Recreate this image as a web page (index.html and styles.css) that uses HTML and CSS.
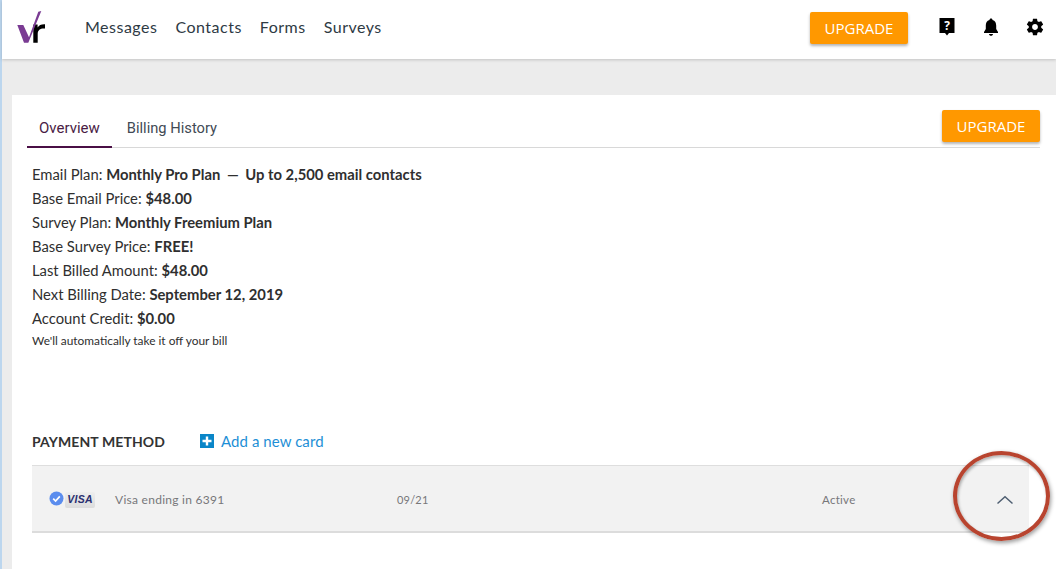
FILE: index.html
```html
<!DOCTYPE html>
<html lang="en">
<head>
<meta charset="utf-8">
<title>Billing</title>
<link rel="stylesheet" href="styles.css">
</head>
<body>
<div class="app">
  <header class="topbar">
    <svg class="logo" width="30" height="34" viewBox="0 -1 30 34">
      <path class="logo-r" d="M16.300 30.700V12.500H20.600V15.500C21.800 13.200 24.500 12 28 12.200V16.600C23.500 16.200 20.700 18 20.700 22V30.700Z"/>
      <path class="logo-v" d="M0.300 13H6.300L12 25.300L21.300 -0.300L24.300 -1L11.300 30.700H7Z"/>
    </svg>
    <nav class="mainnav">
      <a>Messages</a>
      <a>Contacts</a>
      <a>Forms</a>
      <a>Surveys</a>
    </nav>
    <button class="upgrade upgrade-top">UPGRADE</button>
    <div class="tools">
      <svg width="16" height="20" viewBox="0 0 16 20"><path d="M0.500 1H15.500V16H10L8 18.500L6 16H0.500Z"/><text x="8" y="13" class="qmark">?</text></svg>
      <svg width="16" height="18" viewBox="0 0 16 18"><path d="M8 0.500C9 0.500 9.500 1.200 9.500 2C12.200 2.800 13.200 5 13.200 7.500V11L15 14V15H1V14L2.800 11V7.500C2.800 5 3.800 2.800 6.500 2C6.500 1.200 7 0.500 8 0.500ZM6 16H10C10 17 9 17.800 8 17.800C7 17.800 6 17 6 16Z"/></svg>
      <svg class="gear" width="20" height="20" viewBox="0 0 24 24"><path d="M19.430 12.980c.04-.32.070-.64.070-.98s-.03-.66-.07-.98l2.110-1.650c.19-.15.240-.42.120-.64l-2-3.460c-.12-.22-.39-.3-.61-.22l-2.490 1c-.52-.4-1.080-.73-1.690-.98l-.38-2.650C14.460 2.180 14.250 2 14 2h-4c-.25 0-.46.180-.49.420l-.38 2.650c-.61.25-1.170.59-1.690.98l-2.490-1c-.23-.09-.49 0-.61.220l-2 3.460c-.13.220-.07.490.12.640l2.110 1.650c-.04.320-.07.650-.07.980s.03.660.07.980l-2.110 1.650c-.19.150-.24.420-.12.640l2 3.460c.12.220.39.300.61.220l2.490-1c.52.400 1.080.730 1.690.980l.38 2.650c.03.240.24.420.49.420h4c.25 0 .46-.18.49-.42l.38-2.650c.61-.25 1.170-.59 1.690-.98l2.490 1c.23.090.49 0 .61-.22l2-3.460c.12-.22.070-.49-.12-.64l-2.110-1.650zM12 15.500c-1.930 0-3.500-1.570-3.500-3.500s1.570-3.500 3.500-3.500 3.500 1.570 3.500 3.500-1.570 3.500-3.500 3.500z"/></svg>
    </div>
  </header>

  <main class="card">
    <div class="tabs">
      <a class="tab tab-active">Overview</a>
      <a class="tab">Billing History</a>
      <button class="upgrade upgrade-card">UPGRADE</button>
    </div>

    <ul class="facts">
      <li>Email Plan: <b>Monthly Pro Plan <span class="dash">—</span> Up to 2,500 email contacts</b></li>
      <li>Base Email Price: <b>$48.00</b></li>
      <li>Survey Plan: <b>Monthly Freemium Plan</b></li>
      <li>Base Survey Price: <b>FREE!</b></li>
      <li>Last Billed Amount: <b>$48.00</b></li>
      <li>Next Billing Date: <b>September 12, 2019</b></li>
      <li>Account Credit: <b>$0.00</b></li>
    </ul>
    <p class="note">We'll automatically take it off your bill</p>

    <div class="pay-head">
      <h2>PAYMENT METHOD</h2>
      <a class="add-card">
        <svg width="14" height="14" viewBox="0 0 14 14"><rect width="14" height="14" fill="#0a86c8"/><path d="M5.800 2.500H8.200V5.800H11.500V8.200H8.200V11.500H5.800V8.200H2.500V5.800H5.800Z" fill="#fff"/></svg>
        Add a new card
      </a>
    </div>

    <div class="pay-row">
      <div class="brand">
        <svg class="check" width="15" height="15" viewBox="0 0 15 15"><circle cx="7.500" cy="7.500" r="7" fill="#5b8dee"/><path d="M4.200 7.600L6.600 10L10.800 5.400" fill="none" stroke="#fff" stroke-width="1.700"/></svg>
        <span class="visa">VISA</span>
      </div>
      <span class="c-name">Visa ending in 6391</span>
      <span class="c-exp">09/21</span>
      <span class="c-status">Active</span>
      <svg class="chev" width="18" height="10" viewBox="0 0 18 10"><path d="M1.500 8.500L9 1.800L16.500 8.500" fill="none" stroke="#4f5f72" stroke-width="1.500"/></svg>
    </div>
  </main>
</div>
<div class="annotation"></div>
</body>
</html>
```
FILE: styles.css
```css
* { box-sizing: border-box; }
html, body { margin: 0; height: 100%; }
body {
  width: 1056px;
  height: 569px;
  overflow: hidden;
  position: relative;
  background: #fff;
  font-family: "Lato", "Open Sans", sans-serif;
  color: #2f2f2f;
}
.app {
  height: 569px;
  margin-left: 2px;
  background: #ececec;
  box-shadow: -2px 0 0 #bcd6ee;
  display: flex;
  flex-direction: column;
}
.topbar {
  height: 59px;
  flex: none;
  background: #fff;
  box-shadow: 0 1px 3px rgba(0, 0, 0, .18);
  display: flex;
  align-items: center;
  padding-left: 15px;
  position: relative;
}
.logo { flex: none; margin-top: -3px; }
.logo-v { fill: #7a3b93; }
.logo-r { fill: #000; }
.mainnav {
  display: flex;
  gap: 18px;
  margin-left: 38px;
  margin-top: -7px;
  font-size: 16px;
  letter-spacing: .5px;
  color: #2e3a44;
}
.upgrade {
  border: 0;
  background: #ff9800;
  color: #fff;
  font-family: "Open Sans", sans-serif;
  font-size: 15px;
  width: 98px;
  height: 32px;
  padding: 0;
  border-radius: 2px;
  box-shadow: 0 2px 3px rgba(0, 0, 0, .3);
}
.upgrade-top { margin-left: auto; margin-top: -3px; }
.tools {
  display: flex;
  align-items: center;
  gap: 28px;
  margin-left: 31px;
  margin-right: 11px;
  margin-top: -5px;
}
.tools svg { display: block; }
.tools .gear { margin-left: -2px; }
.qmark { fill: #fff; font: 700 12px "Open Sans", sans-serif; text-anchor: middle; }
.card {
  margin: 36px 0 0 10px;
  flex: 1;
  background: #fff;
  padding: 0 16px 0 20px;
}
.tabs {
  display: flex;
  align-items: flex-end;
  height: 53px;
  margin-left: -5px;
  border-bottom: 1px solid #d8d8d8;
  position: relative;
}
.tab {
  font-family: "Roboto", sans-serif;
  font-size: 14.700px;
  color: #424a55;
  height: 38px;
  padding: 9px 12px 0;
  margin-bottom: -1px;
}
.tab-active {
  font-size: 15px;
  color: #4a1c45;
  border-bottom: 2px solid #4a0f45;
  margin-right: 3px;
}
.upgrade-card {
  position: absolute;
  right: 0;
  top: 15px;
}
.facts {
  list-style: none;
  margin: 14px 0 0;
  padding: 0;
  font-size: 14.800px;
  line-height: 24px;
}
.facts b { font-weight: 700; }
.dash { padding: 0 3px; }
.note {
  margin: 3px 0 0;
  font-size: 11.900px;
  line-height: 16px;
}
.pay-head {
  display: flex;
  align-items: center;
  margin-top: 82px;
  height: 20px;
}
.pay-head h2 {
  margin: 0;
  font-size: 14px;
  font-weight: 700;
  letter-spacing: .1px;
  color: #333;
}
.add-card {
  display: flex;
  align-items: center;
  gap: 7px;
  margin-left: 35px;
  color: #1e8fd6;
  font-size: 15px;
  letter-spacing: .07px;
}
.pay-row {
  display: flex;
  align-items: center;
  height: 68px;
  margin-top: 14px;
  margin-right: 11px;
  background: #f2f2f2;
  border-top: 1px solid #dedede;
  border-bottom: 2px solid #dcdcdc;
  font-size: 12px;
  letter-spacing: .27px;
  color: #77777a;
  padding: 2px 0 0 17px;
}
.brand {
  display: flex;
  align-items: flex-start;
  width: 66px;
  flex: none;
}
.check { flex: none; }
.visa {
  font: italic 700 10.500px "Liberation Sans", sans-serif;
  color: #2a2f70;
  background: linear-gradient(#eee, #dcdcdc);
  width: 30px;
  height: 16px;
  margin-left: 1px;
  margin-top: 1px;
  border-radius: 2px;
  text-align: center;
  line-height: 14px;
  flex: none;
}
.c-name { width: 282px; flex: none; }
.c-exp { width: 425px; flex: none; font-size: 11px; letter-spacing: .2px; }
.c-status { width: 174px; flex: none; font-size: 11.500px; }
.chev { flex: none; }
.annotation {
  position: absolute;
  left: 953px;
  top: 451px;
  width: 97px;
  height: 90px;
  border: 4px solid #b8442f;
  border-radius: 50%;
  box-shadow: 1px 2px 4px rgba(0, 0, 0, .4), inset 1px 2px 3px rgba(0, 0, 0, .3);
}
```
